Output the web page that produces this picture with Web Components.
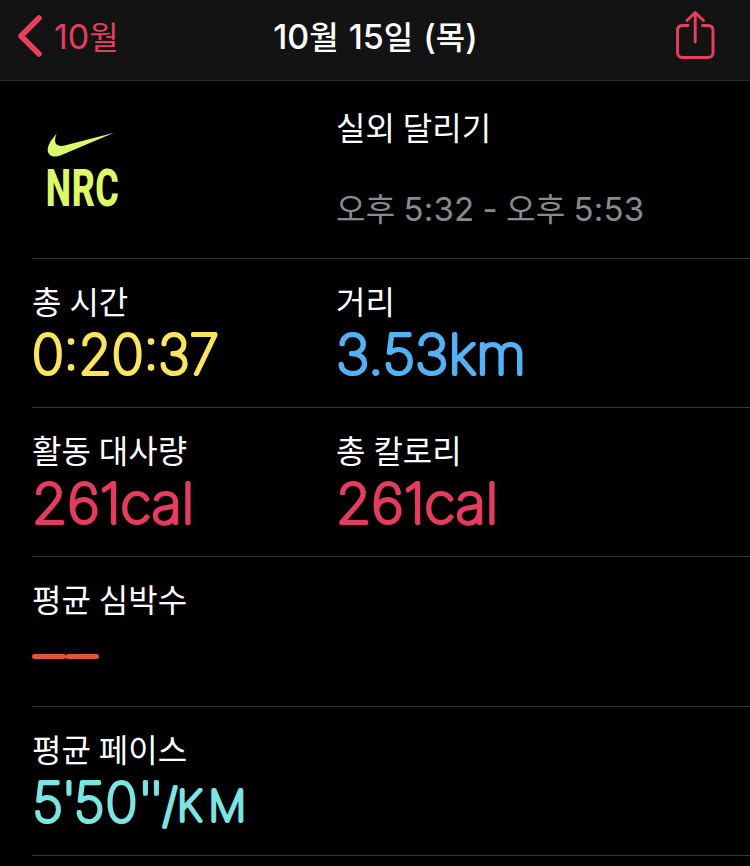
<!DOCTYPE html>
<html lang="ko">
<head>
<meta charset="utf-8">
<title>10월 15일 (목)</title>
<style>
body { margin: 0; background: #000; color: #fff; font-family: "Noto Sans CJK KR", sans-serif; }
</style>
</head>
<body>
<workout-page></workout-page>
<script>
const define = (name, html, setup) => customElements.define(name, class extends HTMLElement {
  connectedCallback() {
    if (this.shadowRoot) return;
    this.attachShadow({ mode: 'open' }).innerHTML = html;
    if (setup) setup(this, this.shadowRoot);
  }
});

define('nav-bar', `
<style>
:host { display: grid; grid-template-columns: 1fr auto 1fr; align-items: center; box-sizing: border-box; height: 81px; background: #131313; border-bottom: 1px solid #2b2b2b; padding: 0 35px 0 17px; color: #e53e5e; }
.back { display: flex; align-items: center; gap: 11px; font-size: 32px; line-height: 40px; padding-bottom: 8px; white-space: nowrap; }
.back span { margin-top: -1px; }
.title { color: #fff; font-size: 32px; line-height: 40px; font-weight: 500; padding-bottom: 9px; white-space: nowrap; word-spacing: 1px; margin-right: -19px; }
.share { justify-self: end; height: 50px; padding-bottom: 9px; }
svg { display: block; }
.back svg { margin-top: -1px; }
</style>
<div class="back"><svg width="26" height="44" viewBox="0 0 26 44" fill="none" stroke="#ec3f60" stroke-width="5.6" stroke-linecap="round" stroke-linejoin="round"><path d="M22 4 4 22 22 40"/></svg><span><slot name="back"></slot></span></div>
<div class="title"><slot></slot></div>
<div class="share"><svg width="40" height="50" viewBox="0 0 40 50" fill="none" stroke="#e53e5e" stroke-width="2.900" stroke-linecap="round" stroke-linejoin="round"><path d="M13 14.500H7.500Q2.500 14.500 2.500 19.500V41.500Q2.500 46.500 7.500 46.500H33Q38 46.500 38 41.500V19.500Q38 14.500 33 14.500H27.500M20.200 31V1.600M12 9.500 20.200 1.600 28.500 9.500"/></svg></div>`);

define('nrc-logo', `
<style>:host { display: block; width: 90px; height: 90px; } svg { display: block; }</style>
<svg width="90" height="90" viewBox="42 129 90 90" fill="#dcfa67">
<path d="M56.700 133.500C52.500 138.500 47.500 144.500 47.700 150C48 156.500 54.500 158 61 155.200L114 132.800L65.500 145.300C56.500 147.500 52.500 143.500 56.700 133.500Z"/>
<text transform="translate(45.800 206) scale(.69 1)" x="0 37.500 71.500" y="0" font-family="Roboto" font-size="52" font-weight="800">NRC</text>
</svg>`);

define('workout-header', `
<style>
:host { display: grid; grid-template-columns: 304px 1fr; box-sizing: border-box; height: 178px; margin-left: 32px; border-bottom: 1px solid #333; }
nrc-logo { margin: 48px 0 0 10px; }
.text { display: flex; flex-direction: column; gap: 41px; padding-top: 25px; white-space: nowrap; word-spacing: -1px; font-size: 32px; line-height: 40px; }
.time { color: #8a898e; letter-spacing: .2px; }
</style>
<nrc-logo></nrc-logo>
<div class="text"><div><slot name="type"></slot></div><div class="time"><slot name="time"></slot></div></div>`);

define('metric-row', `
<style>:host { display: grid; grid-template-columns: 304px 1fr; box-sizing: border-box; height: var(--h, 149px); margin-left: 32px; border-bottom: 1px solid #333; }</style>
<slot></slot>`);

define('metric-item', `
<style>
:host { display: block; padding-top: 21px; }
.label { font-size: 32px; line-height: 40px; word-spacing: -1px; white-space: nowrap; }
svg { display: block; overflow: visible; margin-top: 2px; }
text { font-family: Inter, sans-serif; stroke-linejoin: round; stroke-linecap: round; font-weight: 100; stroke-width: 3.8px; }
</style>
<div class="label"></div><svg width="240" height="62"></svg>`, (el, root) => {
  root.querySelector('.label').textContent = el.getAttribute('label');
  const color = el.getAttribute('color');
  const svg = root.querySelector('svg');
  const value = el.getAttribute('value');
  if (value) {
    svg.innerHTML = `<text y="52" font-size="54" fill="${color}" stroke="${color}" x="${el.getAttribute('x')}" textLength="${el.getAttribute('width')}" lengthAdjust="spacingAndGlyphs"></text>`;
    svg.firstChild.textContent = value;
  } else if (el.hasAttribute('pace')) {
    svg.innerHTML = `<text y="52" font-size="54" fill="${color}" stroke="${color}"><tspan x="0.500 29.500 42 73.500 106 117">5'50''</tspan><tspan x="130.500" font-size="46">/</tspan><tspan x="145 176.500" y="51" font-size="42">KM</tspan></text>`;
  } else {
    svg.innerHTML = `<path d="M2.500 36.500H31.500M36 36.500H64.500" stroke="${color}" stroke-width="5" stroke-linecap="round"/>`;
  }
});

define('workout-page', `
<style>
:host { display: block; width: 750px; height: 866px; overflow: hidden; background: #000; }
.num { font-family: Inter, sans-serif; font-size: 34px; }
[slot=time] .num { font-size: 33px; }
</style>
<nav-bar><span slot="back"><span class="num">10</span>월</span><span class="num">10</span>월 <span class="num">15</span>일 <span class="num">(</span>목<span class="num">)</span></nav-bar>
<workout-header><span slot="type">실외 달리기</span><span slot="time">오후 <span class="num">5:32</span> <span class="num">-</span> 오후 <span class="num">5:53</span></span></workout-header>
<metric-row><metric-item label="총 시간" color="#fbe55d" value="0:20:37" x="0" width="187"></metric-item><metric-item label="거리" color="#55b1f5" value="3.53km" x="0" width="190"></metric-item></metric-row>
<metric-row><metric-item label="활동 대사량" color="#e33c5c" value="261cal" x="0" width="162"></metric-item><metric-item label="총 칼로리" color="#e33c5c" value="261cal" x="0" width="162"></metric-item></metric-row>
<metric-row style="--h:150px"><metric-item label="평균 심박수" color="#e5513a"></metric-item></metric-row>
<metric-row><metric-item label="평균 페이스" color="#7be5e3" pace></metric-item></metric-row>`);
</script>
</body>
</html>
